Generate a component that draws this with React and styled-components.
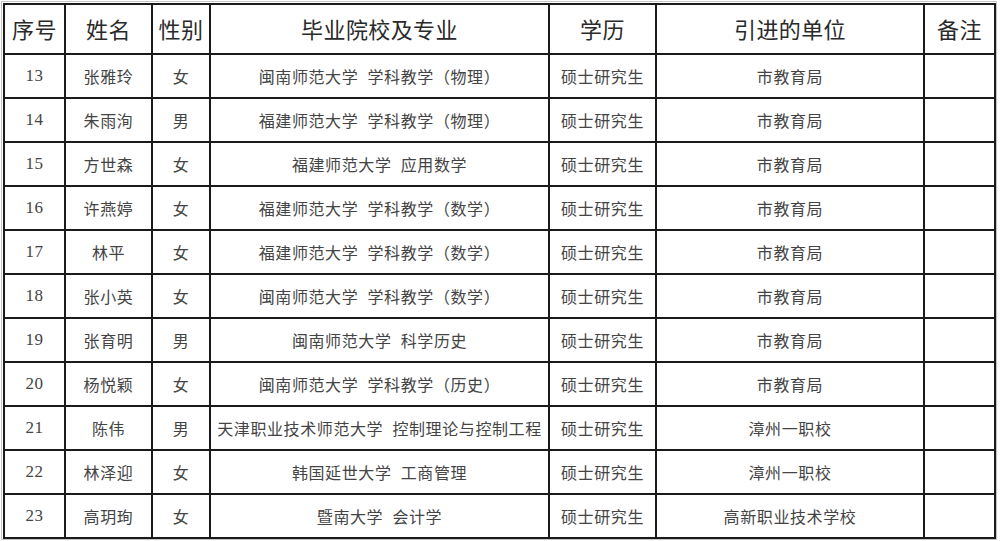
import styled, { createGlobalStyle } from "styled-components";

const GlobalStyle = createGlobalStyle`
    html, body {
        margin: 0;
        padding: 0;
        background: #ffffff;
    }
    body {
        font-family: "Liberation Serif", "Noto Sans CJK SC", serif;
    }
`;

const Frame = styled.div`
    display: inline-block;
    margin: 1px 0 0 1px;
    padding: 1px 0 0 1px;
    border: 1px solid #c4c4c4;
`;

const Table = styled.table`
    border-collapse: separate;
    border-spacing: 0;
    table-layout: fixed;
    border-top: 2px solid #1a1a1a;
    border-left: 2px solid #1a1a1a;
`;

const Cell = styled.td`
    box-sizing: border-box;
    width: ${(p) => p.$w}px;
    height: 44px;
    padding: 0;
    border-right: 2px solid #1a1a1a;
    border-bottom: 2px solid #1a1a1a;
    text-align: center;
    vertical-align: middle;
    font-size: ${(p) => (p.$num ? 17 : 16)}px;
    color: #444444;
    white-space: nowrap;
    overflow: hidden;
    letter-spacing: 0.6px;
`;

const HeadCell = styled(Cell).attrs({ as: "th" })`
    height: 50px;
    font-weight: normal;
    font-size: 22px;
    color: #2a2a2a;
    letter-spacing: 0.4px;
    padding-bottom: 2px;
`;

const Text = styled.span`
    white-space: pre;
`;

const columns = [
    { title: "序号", w: 61 },
    { title: "姓名", w: 87 },
    { title: "性别", w: 58 },
    { title: "毕业院校及专业", w: 339 },
    { title: "学历", w: 107 },
    { title: "引进的单位", w: 268 },
    { title: "备注", w: 71 },
];

const rows = [
    ["13", "张雅玲", "女", "闽南师范大学  学科教学（物理）", "硕士研究生", "市教育局"],
    ["14", "朱雨洵", "男", "福建师范大学  学科教学（物理）", "硕士研究生", "市教育局"],
    ["15", "方世森", "女", "福建师范大学  应用数学", "硕士研究生", "市教育局"],
    ["16", "许燕婷", "女", "福建师范大学  学科教学（数学）", "硕士研究生", "市教育局"],
    ["17", "林平", "女", "福建师范大学  学科教学（数学）", "硕士研究生", "市教育局"],
    ["18", "张小英", "女", "闽南师范大学  学科教学（数学）", "硕士研究生", "市教育局"],
    ["19", "张育明", "男", "闽南师范大学  科学历史", "硕士研究生", "市教育局"],
    ["20", "杨悦颖", "女", "闽南师范大学  学科教学（历史）", "硕士研究生", "市教育局"],
    ["21", "陈伟", "男", "天津职业技术师范大学  控制理论与控制工程", "硕士研究生", "漳州一职校"],
    ["22", "林泽迎", "女", "韩国延世大学  工商管理", "硕士研究生", "漳州一职校"],
    ["23", "高玥珣", "女", "暨南大学  会计学", "硕士研究生", "高新职业技术学校"],
];

export default function App() {
    return (
        <>
            <GlobalStyle />
            <Frame>
                <Table>
                    <thead>
                        <tr>
                            {columns.map((c) => (
                                <HeadCell key={c.title} $w={c.w}>
                                    {c.title}
                                </HeadCell>
                            ))}
                        </tr>
                    </thead>
                    <tbody>
                        {rows.map((r) => (
                            <tr key={r[0]}>
                                {columns.map((c, i) => (
                                    <Cell key={c.title} $w={c.w} $num={i === 0}>
                                        <Text>{r[i] || ""}</Text>
                                    </Cell>
                                ))}
                            </tr>
                        ))}
                    </tbody>
                </Table>
            </Frame>
        </>
    );
}
